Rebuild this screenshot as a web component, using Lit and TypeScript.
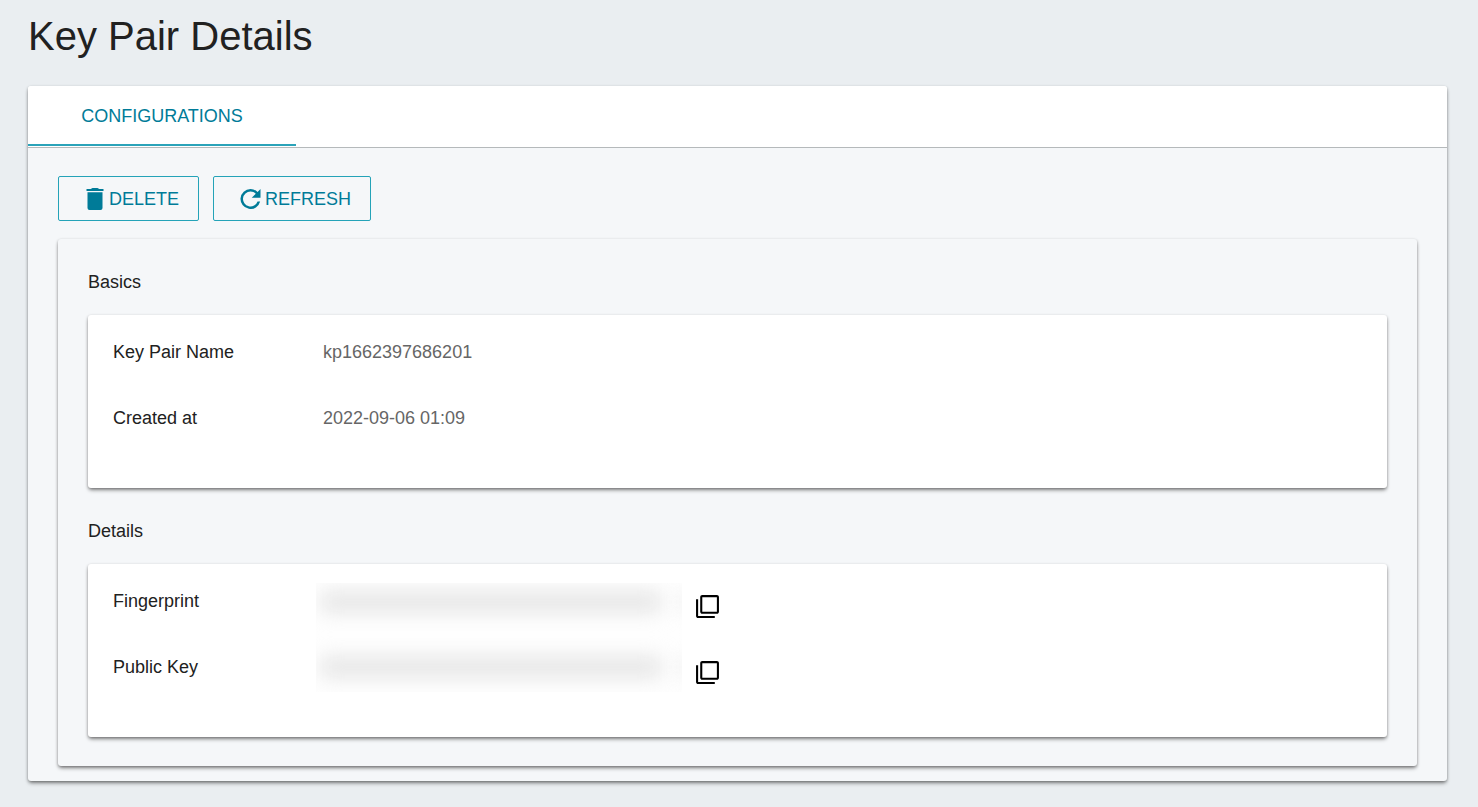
import { LitElement, html, css } from "lit";
import { customElement } from "lit/decorators.js";

const trashIcon = html`<svg class="icon trash" viewBox="0 0 18 23" aria-hidden="true">
  <path d="M.5 2h4.200L6.500 1h5l1.800 1h4.200v2H.5zM1.500 5.300h15v15.700a2 2 0 0 1-2 2h-11a2 2 0 0 1-2-2z" />
</svg>`;

const refreshIcon = html`<svg class="icon refresh" viewBox="3.600 3.200 16.800 16.800" aria-hidden="true">
  <path d="M17.650 6.350A7.960 7.960 0 0 0 12 4a8 8 0 1 0 7.730 10h-2.080A6 6 0 1 1 12 6c1.660 0 3.140.690 4.220 1.780L13 11h7V4z" />
</svg>`;

const copyIcon = html`<svg class="icon copy" viewBox="0 0 24 24" aria-hidden="true">
  <path d="M3 5H1v16c0 1.100.9 2 2 2h16v-2H3V5zm18-4H7c-1.100 0-2 .9-2 2v14c0 1.100.9 2 2 2h14c1.100 0 2-.9 2-2V3c0-1.100-.9-2-2-2zm0 16H7V3h14v14z" />
</svg>`;

@customElement("app-root")
export class AppRoot extends LitElement {
  static styles = css`
    :host {
      display: block;
      box-sizing: border-box;
      min-height: 100vh;
      padding: 12px 31px 26px 28px;
      background: #eaeef1;
      color: #212121;
      font-family: "Liberation Sans", Arial, sans-serif;
      font-size: 18px;
      line-height: 24px;
    }
    * {
      box-sizing: border-box;
    }
    h1,
    h2,
    dl,
    dd {
      margin: 0;
      font-weight: 400;
    }
    h1 {
      margin-bottom: 26px;
      font-size: 40px;
      line-height: 48px;
    }
    h2 {
      font-size: 18px;
      line-height: 24px;
    }
    button {
      font: inherit;
      cursor: pointer;
    }
    .icon {
      display: block;
      flex: none;
      fill: currentColor;
    }
    .surface {
      border-radius: 3px;
      box-shadow: 0 3px 4px -1px rgba(0, 0, 0, 0.4), 0 1px 3px rgba(0, 0, 0, 0.3);
    }
    .page {
      background: #f5f7f9;
    }
    .tabs {
      display: flex;
      height: 62px;
      padding-bottom: 1px;
      background: #fff;
      border-bottom: 1px solid #b5b9bb;
      border-radius: 3px 3px 0 0;
    }
    .tab {
      width: 268px;
      padding: 2px 0 0;
      color: #007b98;
      background: none;
      border: 0;
      border-bottom: 2px solid #2ba3b9;
    }
    .content {
      padding: 28px 30px 15px;
    }
    .actions {
      display: flex;
      gap: 14px;
      margin-bottom: 18px;
    }
    .action {
      display: flex;
      align-items: center;
      gap: 5px;
      height: 45px;
      padding: 0 19px 0 27px;
      color: #007b98;
      background: transparent;
      border: 1px solid #24a3b8;
      border-radius: 2px;
    }
    .action .refresh {
      margin: 0 -1px;
    }
    .trash {
      width: 18px;
      height: 23px;
    }
    .refresh {
      width: 21px;
      height: 21px;
    }
    .panel {
      padding: 31px 30px 29px;
    }
    .card {
      margin-top: 21px;
      padding: 4px 25px 37px;
      background: #fff;
    }
    .card + h2 {
      margin-top: 31px;
    }
    .row {
      display: grid;
      grid-template-columns: 203px 1fr;
      height: 66px;
    }
    dt,
    .value {
      padding-top: 21px;
    }
    .value {
      padding-left: 7px;
      color: #666;
    }
    .secret {
      display: flex;
      gap: 13px;
    }
    .mask {
      display: flex;
      gap: 24px;
      width: 366px;
      height: 51px;
      margin-top: 15px;
      padding-top: 9px;
      padding-left: 5px;
      overflow: hidden;
      background: #fefefe;
    }
    .row + .row .mask {
      height: 58px;
      margin-top: 0;
      padding-top: 23px;
    }
    .smear {
      flex: none;
      width: 340px;
      height: 20px;
      background: #e4e4e4;
      filter: blur(10px);
    }
    .smear + .smear {
      width: 12px;
    }
    .copy-button {
      align-self: flex-start;
      margin-top: 26px;
      padding: 0;
      color: #000;
      background: none;
      border: 0;
    }
    .copy {
      width: 25px;
      height: 25px;
    }
  `;

  private field(label: string, value: string) {
    return html`<div class="row">
      <dt>${label}</dt>
      <dd class="value">${value}</dd>
    </div>`;
  }

  private secretField(label: string) {
    return html`<div class="row">
      <dt>${label}</dt>
      <dd class="secret">
        <div class="mask">
          <div class="smear"></div>
          <div class="smear"></div>
        </div>
        <button class="copy-button" type="button" aria-label="Copy ${label}">${copyIcon}</button>
      </dd>
    </div>`;
  }

  render() {
    return html`
      <h1>Key Pair Details</h1>
      <main class="page surface">
        <div class="tabs" role="tablist">
          <button class="tab" role="tab" aria-selected="true" type="button">CONFIGURATIONS</button>
        </div>
        <div class="content">
          <div class="actions">
            <button class="action" type="button">${trashIcon}DELETE</button>
            <button class="action" type="button">${refreshIcon}REFRESH</button>
          </div>
          <section class="panel surface">
            <h2>Basics</h2>
            <dl class="card surface">
              ${this.field("Key Pair Name", "kp1662397686201")}
              ${this.field("Created at", "2022-09-06 01:09")}
            </dl>
            <h2>Details</h2>
            <dl class="card surface">
              ${this.secretField("Fingerprint")}
              ${this.secretField("Public Key")}
            </dl>
          </section>
        </div>
      </main>
    `;
  }
}
